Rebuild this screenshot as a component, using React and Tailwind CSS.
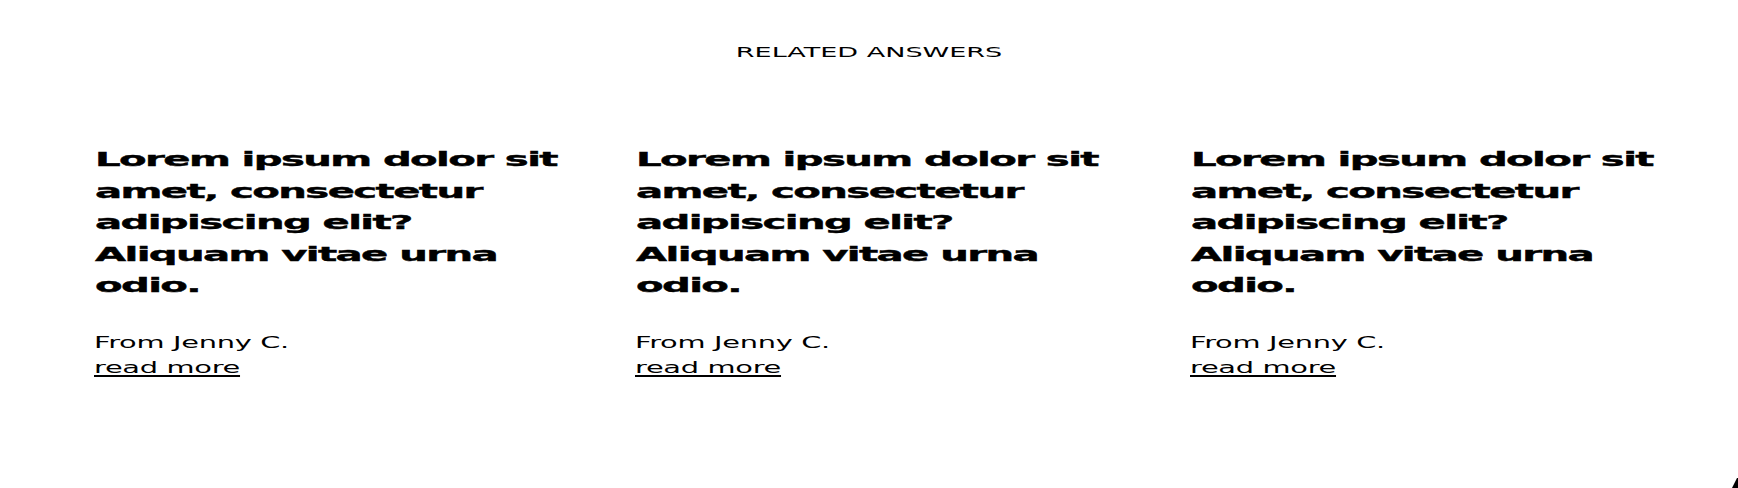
import React from "react";

const items = [
  { w: "w-[541px]" },
  { w: "w-[555px]" },
  { w: "flex-1" },
];

const headline =
  "Lorem ipsum dolor sit\namet, consectetur\nadipiscing elit?\nAliquam vitae urna\nodio.";

export default function App() {
  return (
    <div className="relative w-[1738px] h-[488px] overflow-hidden bg-white text-black font-['DejaVu_Sans',sans-serif]">
      <div className="flex justify-center pt-[45px]">
        <h2 className="text-[14px] leading-[14px] font-normal scale-x-[1.93] origin-center">
          RELATED ANSWERS
        </h2>
      </div>

      <div className="flex mt-[85px] pl-[95px]">
        {items.map((it, i) => (
          <div key={i} className={`${it.w} shrink-0`}>
            <h3 className="w-[260px] whitespace-pre-line text-[20px] leading-[31.5px] font-bold tracking-[-0.04em] origin-left scale-x-[2.01] [-webkit-text-stroke:0.4px_#000]">
              {headline}
            </h3>
            <div className="mt-[28px] -ml-px w-[200px] text-[16px] leading-[25.5px] tracking-[-0.01em] origin-left scale-x-[1.8]">
              <p>From Jenny C.</p>
              <a
                href="#"
                className="underline underline-offset-[2px] decoration-[1.5px]"
              >
                read more
              </a>
            </div>
          </div>
        ))}
      </div>

      <svg
        className="absolute right-0 bottom-0 w-[8px] h-[10px]"
        viewBox="0 0 8 10"
      >
        <polygon points="7,0 8,0 8,10 2,10" fill="#000" />
      </svg>
    </div>
  );
}
